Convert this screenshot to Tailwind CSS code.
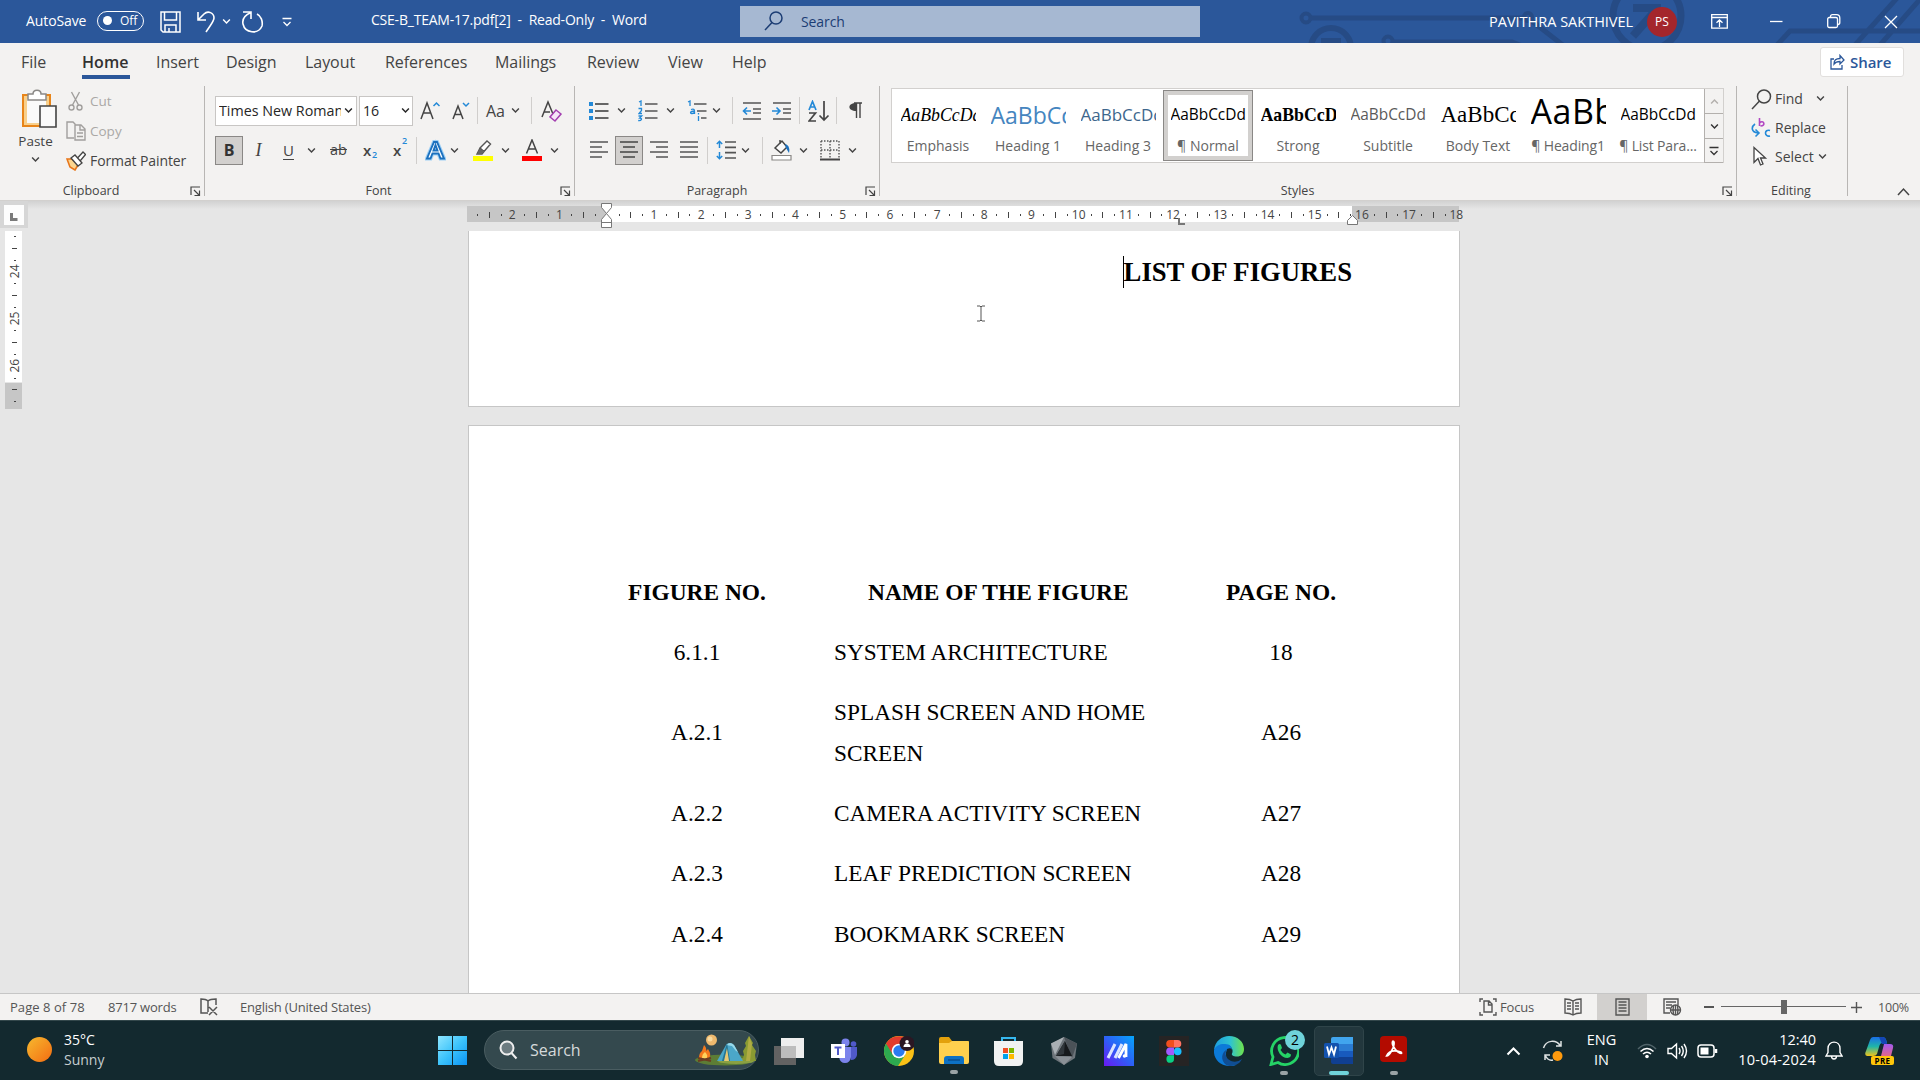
<!DOCTYPE html>
<html lang="en">
<head>
<meta charset="utf-8">
<title>CSE-B_TEAM-17.pdf[2] - Word</title>
<script src="https://cdn.jsdelivr.net/npm/@tailwindcss/browser@4"></script>
</head>
<body class="w-[1920px] h-[1080px] overflow-hidden flex flex-col bg-[#e6e6e6] font-['Open_Sans','Noto_Sans',sans-serif] text-[14px] text-[#444] whitespace-nowrap [&_svg]:block [&_svg]:shrink-0">
<svg class="absolute size-0">
  <symbol id="chev" viewBox="0 0 8 8"><path d="M1 2.3l3 3 3-3" fill="none" stroke="currentColor" stroke-width="1.3"/></symbol>
  <symbol id="launch" viewBox="0 0 11 11"><path d="M1 9V1h9M4 4l5 5M9.500 4.500v5h-5" fill="none" stroke="currentColor" stroke-width="1.200"/></symbol>
</svg>

<!-- Title bar -->
<header class="relative h-[43px] shrink-0 bg-[#2b579a] text-white flex items-center">
  <svg class="absolute left-[1280px] top-0" width="640" height="43" fill="none" stroke="#264b85" stroke-width="5">
    <circle cx="26" cy="18" r="4.500" stroke-width="4"/><path d="M31 18H244"/><circle cx="51" cy="48" r="20" stroke-width="6"/><path d="M41 41h17v4" stroke-width="6"/><circle cx="108" cy="41" r="4.500" stroke-width="4"/><path d="M113 42H232l10 4M248 18l36 28"/><circle cx="248" cy="17" r="4" stroke-width="4"/>
    <circle cx="367" cy="16" r="34" stroke-width="7"/><path d="M353 8h24v20M376 10L353 36" stroke-width="8"/>
    <path d="M496 46l14-15H640M575 45L618-3M600 45L642-3"/>
  </svg>
  <div class="relative w-[71px] ml-[26px] text-[14px] tracking-[-0.100px] pb-[2px]">AutoSave</div>
  <div class="relative w-[47px] h-5 mb-[2px] rounded-full border border-white flex items-center pl-[5px] gap-[8px] text-[12px]"><span class="size-[9px] rounded-full bg-white"></span>Off</div>
  <svg class="ml-4" width="21" height="22" fill="none" stroke="#fff" stroke-width="1.500"><path d="M1 1h19v20H3l-2-2zM4.500 1v8h12V1M5 21v-7h11v7M9 21v-4"/></svg>
  <svg class="ml-[15px]" width="20" height="24" fill="none" stroke="#fff" stroke-width="1.600"><path d="M2 2v8h8M2 10l6-6c4-4 10-1 10 4 0 3-2 5-8 14"/></svg>
  <svg class="ml-[6px]" width="9" height="9"><use href="#chev"/></svg>
  <svg class="ml-[10px]" width="24" height="24" fill="none" stroke="#fff" stroke-width="1.600"><path d="M2 2h8v7M10 2.500C4 5 1 9 2 14c2 9 15 11 19 2 1-5-1-10-5-12"/></svg>
  <svg class="ml-[17px]" width="10" height="10" fill="none" stroke="#fff" stroke-width="1.300"><path d="M0.500 1.500h9M1.500 5l3.500 3.500L8.500 5"/></svg>
  <div class="ml-[79px] w-[369px] pb-[4px] text-[14px] tracking-[-0.220px] whitespace-pre">CSE-B_TEAM-17.pdf[2]  -  Read-Only  -  Word</div>
  <div class="relative w-[460px] h-[31px] mb-[1px] bg-[#a6b8d2] text-[#1c3d74] flex items-center pl-6">
    <svg width="19" height="20" fill="none" stroke="#1c3d74" stroke-width="1.500"><circle cx="12" cy="7" r="6"/><path d="M8 11.500L1 19"/></svg>
    <span class="ml-[18px] tracking-[-0.100px]">Search</span>
  </div>
  <div class="relative ml-[289px] w-[158px] text-[14.500px]">PAVITHRA SAKTHIVEL</div>
  <div class="relative size-[30px] rounded-full bg-[#a4262c] flex items-center justify-center text-[12px]">PS</div>
  <svg class="relative ml-[34px]" width="17" height="15" fill="none" stroke="#fff" stroke-width="1.300"><path d="M.7.7h15.600v13.500H.7zM.7 3.500h15.600M8.500 13V6M5.500 8.800l3-3 3 3"/></svg>
  <svg class="relative ml-[42px]" width="13" height="3"><path d="M0 1.500h12.500" stroke="#fff" stroke-width="1.300"/></svg>
  <svg class="relative ml-11" width="14" height="15" fill="none" stroke="#fff" stroke-width="1.300"><rect x=".7" y="3.500" width="9.800" height="10" rx="1.500"/><path d="M3.500 3V2.500q0-1.800 2-1.800h4q3.300 0 3.300 3.300v4.500q0 2-2 2"/></svg>
  <svg class="relative ml-[43px]" width="14" height="14"><path d="M1 1l12 12M13 1L1 13" stroke="#fff" stroke-width="1.300"/></svg>
</header>

<!-- Ribbon tabs -->
<nav class="h-[41px] shrink-0 bg-[#f3f2f1] flex items-center text-[16px] tracking-[-0.050px] pl-[21px] pb-[3px]">
  <span class="w-[61px]">File</span>
  <span class="w-[74px] h-full"><span class="relative inline-flex items-center w-[48px] h-full font-semibold text-[#323130] tracking-[0.100px]">Home<span class="absolute left-0 bottom-[2px] w-[48px] h-[4px] bg-[#2b579a]"></span></span></span>
  <span class="w-[70px]">Insert</span><span class="w-[79px]">Design</span><span class="w-[80px]">Layout</span><span class="w-[110px]">References</span><span class="w-[92px]">Mailings</span><span class="w-[81px]">Review</span><span class="w-[64px]">View</span><span class="w-[1088px]">Help</span>
  <span class="w-[84px] h-[30px] bg-white border border-[#e1dfdd] rounded-[3px] flex items-center text-[#2b579a] font-semibold pl-[9px] text-[15px]">
    <svg class="mr-[5px]" width="15" height="16" fill="none" stroke="#2b579a" stroke-width="1.300"><path d="M4 5H1v10h11v-4M4 10c0-4 2-5.500 6-5.500V1.500l4 4.500-4 4V7.500C7 7.500 5.500 8 4 10z"/></svg>Share</span>
</nav>

<!-- Ribbon -->
<section class="h-[117px] shrink-0 bg-[#f3f2f1] border-b border-[#d2d0ce] flex pt-[2px] text-[13.500px]">
  <!-- Clipboard -->
  <div class="w-[205px] h-[110px] border-r border-[#b8b6b4] flex flex-col">
    <div class="flex h-[93px]">
      <div class="w-[66px] pl-[9px] flex flex-col items-center pt-[3px]">
        <svg width="38" height="40" fill="none"><path d="M4 6h27v31H4z" fill="#f8d08c" stroke="#e8851a" stroke-width="2"/><path d="M8 10h19v24H8z" fill="#fafafa"/><path d="M9 11V5h5c0-5 8-5 8 0h5v6z" fill="#fff" stroke="#8a8886" stroke-width="1.500"/><path d="M21 17h16v21H21z" fill="#fafafa" stroke="#444" stroke-width="1.600"/></svg>
        <span class="leading-[18px] mt-[3px] pr-[4px]">Paste</span>
        <svg class="mt-[5px] mr-[4px]" width="9" height="9"><use href="#chev"/></svg>
      </div>
      <div class="flex flex-col gap-[10px] pt-[5px] text-[#aaa8a6] leading-5">
        <div class="flex h-5 items-center"><svg class="mr-1" width="20" height="20" fill="none" stroke="#a19f9d" stroke-width="1.400"><path d="M5.500 1l7 13M13.500 1l-7 13"/><circle cx="5.500" cy="16.500" r="2.500"/><circle cx="13.500" cy="16.500" r="2.500"/></svg>Cut</div>
        <div class="flex h-5 items-center"><svg class="mr-1" width="20" height="20" fill="none" stroke="#a19f9d" stroke-width="1.400"><path d="M8 17H1V1h6l2 2v14M9 4h6l4 4v11H9zM14 4v5h5M11 12h6M11 15.500h6"/></svg>Copy</div>
        <div class="flex h-5 items-center text-[#444] text-[14px] tracking-[-0.100px]"><svg class="mr-1" width="20" height="20" fill="none"><path d="M1 8h5l6 6-3 5-5-3z" fill="#fbd58f" stroke="#e8761a" stroke-width="1.600"/><path d="M5 7l4-3 7 8-4 3zM12 6.500L17 1l2.500 2.500-5 6" fill="#fff" stroke="#444" stroke-width="1.300"/></svg>Format Painter</div>
      </div>
    </div>
    <div class="flex items-center h-[10px] shrink-0 mt-auto text-[12.500px]"><span class="w-[190px] text-center pr-[8px]">Clipboard</span><svg width="11" height="11"><use href="#launch"/></svg></div>
  </div>
  <!-- Font -->
  <div class="w-[370px] h-[110px] border-r border-[#b8b6b4] flex flex-col pl-[10px]">
    <div class="h-[29px] mt-[10px] flex items-center shrink-0">
      <div class="w-[142px] h-[30px] bg-white border border-[#c8c6c4] flex items-center pl-[3px] text-[14.300px] text-[#262626]"><span class="w-[122px] overflow-hidden">Times New Roman</span><svg class="ml-[3px]" width="9" height="9"><use href="#chev"/></svg></div>
      <div class="w-[54px] h-[30px] ml-[2px] bg-white border border-[#c8c6c4] flex items-center pl-[3px] text-[14.200px] text-[#262626]"><span class="w-[38px]">16</span><svg width="9" height="9"><use href="#chev"/></svg></div>
      <svg class="ml-[7px]" width="20" height="22" fill="none" stroke="#444" stroke-width="1.500"><path d="M1 19L7 3l6 16M3 13h8"/><path d="M13.500 6L16.500 3l3 3" stroke="#2389d7"/></svg>
      <svg class="ml-[12px]" width="18" height="22" fill="none" stroke="#444" stroke-width="1.500"><path d="M1 19L6 6l5 13M3 14.500h6"/><path d="M11 3l3 3 3-3" stroke="#2389d7"/></svg>
      <i class="w-px h-[27px] bg-[#d0cecc] ml-[7px]"></i>
      <span class="ml-[8px] w-[25px] text-[16px]">Aa</span><svg width="9" height="9"><use href="#chev"/></svg>
      <i class="w-px h-[27px] bg-[#d0cecc] ml-[11px]"></i>
      <svg class="ml-[9px]" width="22" height="24" fill="none" stroke="#444" stroke-width="1.500"><path d="M1 18L7 3l5 12M3 13h6"/><path d="M15 11l5 4-6 7-5-4z" fill="#f5e6f8" stroke="#a33fb0"/></svg>
    </div>
    <div class="h-[30px] mt-[10px] flex items-center shrink-0">
      <span class="w-7 h-[29px] bg-[#d2d0ce] border border-[#8a8886] flex items-center justify-center font-bold text-[16px] text-[#333]">B</span>
      <span class="w-[31px] text-center font-['Liberation_Serif',serif] italic text-[18px]">I</span>
      <span class="w-[29px] text-center underline underline-offset-[3px] text-[15px]">U</span>
      <svg class="ml-[4px]" width="9" height="9"><use href="#chev"/></svg>
      <span class="ml-[12px] w-[21px] text-center line-through text-[14.500px]">ab</span>
      <span class="ml-[14px] w-[14px] relative font-semibold text-[15px]">x<span class="absolute left-[9px] top-[9px] text-[9px] text-[#2389d7]">2</span></span>
      <span class="ml-[16px] w-[14px] relative font-semibold text-[15px]">x<span class="absolute left-[9px] top-[-5px] text-[9px] text-[#2389d7]">2</span></span>
      <i class="w-px h-[27px] bg-[#d0cecc] ml-[9px]"></i>
      <svg class="ml-[8px]" width="21" height="22" fill="none"><path d="M2 19.500L9 3h3l7 16.500h-3.500l-2-5h-6l-2 5zM8.500 11.500h4L10.500 6z" fill="#fff" stroke="#9fd0f5" stroke-width="4"/><path d="M2 19.500L9 3h3l7 16.500h-3.500l-2-5h-6l-2 5zM8.500 11.500h4L10.500 6z" fill="#fff" stroke="#1b70be" stroke-width="1.900"/></svg>
      <svg class="ml-[4px]" width="9" height="9"><use href="#chev"/></svg>
      <svg class="ml-[13px]" width="22" height="22" fill="none"><path d="M1 17h20v5H1z" fill="#ff0"/><path d="M8 9l7-7 3.500 3L12 12.500zM8 9l-3 6h5l2-2.500" fill="#fff" stroke="#555" stroke-width="1.400"/><path d="M8 9.500L5 15h5l2-2.500z" fill="#666"/></svg>
      <svg class="ml-[7px]" width="9" height="9"><use href="#chev"/></svg>
      <svg class="ml-[11px]" width="22" height="22" fill="none"><path d="M1 17h20v5H1z" fill="red"/><path d="M5.500 14.500L11 1l5.500 13.500M7.500 10h7" stroke="#444" stroke-width="1.500"/></svg>
      <svg class="ml-[7px]" width="9" height="9"><use href="#chev"/></svg>
    </div>
    <div class="flex items-center h-[10px] shrink-0 mt-auto text-[12.500px]"><span class="w-[345px] text-center pr-[18px]">Font</span><svg width="11" height="11"><use href="#launch"/></svg></div>
  </div>
  <!-- Paragraph -->
  <div class="w-[305px] h-[110px] border-r border-[#b8b6b4] flex flex-col pl-[14px]">
    <div class="h-[29px] mt-[10px] flex items-center shrink-0">
      <svg width="20" height="20"><path d="M6 3h13.500M6 10h13.500M6 17h13.500" stroke="#666" stroke-width="1.800"/><path d="M0 1h4v4H0zM0 8h4v4H0zM0 15h4v4H0z" fill="#2389d7"/></svg>
      <svg class="ml-[8px]" width="9" height="9"><use href="#chev"/></svg>
      <svg class="ml-[12px]" width="20" height="22"><path d="M7 4h12.500M7 11h12.500M7 18h12.500" stroke="#555" stroke-width="1.600"/><path d="M1 2l2-1v5M.5 8.500h3v2l-2.500 3h3M.5 16h3.200l-2 2c3 0 2 3-1.500 2.500" fill="none" stroke="#2389d7" stroke-width="1.300"/></svg>
      <svg class="ml-[8px]" width="9" height="9"><use href="#chev"/></svg>
      <svg class="ml-[12px]" width="20" height="22"><path d="M7 4h12.500M10 11h9.500M14 18h5.500" stroke="#555" stroke-width="1.600"/><path d="M1 2l2-1v5M4 9.500c4-1.500 3.500 1 3.500 4.500M7.500 11c-5 0-4.500 3-2.500 2.500 1 0 2.500-.5 2.500-2M11.500 13v1.500M11.500 16v5" fill="none" stroke="#2389d7" stroke-width="1.300"/></svg>
      <svg class="ml-[5px]" width="9" height="9"><use href="#chev"/></svg>
      <i class="w-px h-[27px] bg-[#d0cecc] ml-[11px]"></i>
      <svg class="ml-[9px]" width="20" height="20"><path d="M1 2h18M11 8h8M11 12h8M1 18h18" stroke="#555" stroke-width="1.600"/><path d="M9 10H2M5 6.500L1.500 10 5 13.500" fill="none" stroke="#2389d7" stroke-width="1.600"/></svg>
      <svg class="ml-[10px]" width="20" height="20"><path d="M1 2h18M11 8h8M11 12h8M1 18h18" stroke="#555" stroke-width="1.600"/><path d="M0 10h7.500M4.500 6.500L8 10l-3.500 3.500" fill="none" stroke="#2389d7" stroke-width="1.600"/></svg>
      <i class="w-px h-[27px] bg-[#d0cecc] ml-[7px]"></i>
      <svg class="ml-[8px]" width="22" height="22" fill="none" stroke-width="1.700"><path d="M1 10L4.500 1.500 8 10M2 7h5" stroke="#2389d7"/><path d="M1 13h6.500L1 21h7M16 1v19M11.500 15.500L16 20l4.500-4.500" stroke="#444"/></svg>
      <i class="w-px h-[27px] bg-[#d0cecc] ml-[6px]"></i>
      <svg class="ml-[11px]" width="14" height="17"><path d="M6 1h8M8.500 1v15M12 1v15" stroke="#444" stroke-width="1.400"/><path d="M8.500 1v8C-1 9-1 1 8.500 1z" fill="#444"/></svg>
    </div>
    <div class="h-[30px] mt-[10px] flex items-center shrink-0">
      <svg class="ml-px" width="19" height="18"><path d="M0 1h18M0 6h12M0 11h18M0 16h12" stroke="#555" stroke-width="1.700"/></svg>
      <span class="ml-[6px] w-7 h-[29px] bg-[#d2d0ce] border border-[#8a8886] flex items-center justify-center"><svg width="18" height="18"><path d="M0 1h18M3 6h12M0 11h18M3 16h12" stroke="#444" stroke-width="1.700"/></svg></span>
      <svg class="ml-[7px]" width="18" height="18"><path d="M0 1h18M6 6h12M0 11h18M6 16h12" stroke="#555" stroke-width="1.700"/></svg>
      <svg class="ml-[12px]" width="18" height="18"><path d="M0 1h18M0 6h18M0 11h18M0 16h18" stroke="#555" stroke-width="1.700"/></svg>
      <i class="w-px h-[27px] bg-[#d0cecc] ml-[9px]"></i>
      <svg class="ml-[8px]" width="21" height="20" fill="none"><path d="M9 2h11M9 7.300h11M9 12.600h11M9 18h11" stroke="#555" stroke-width="1.700"/><path d="M3.500 8V1.500M.8 4l2.700-2.700L6.200 4M3.500 12v6.500M.8 16l2.700 2.700L6.200 16" stroke="#2389d7" stroke-width="1.500"/></svg>
      <svg class="ml-[4px]" width="9" height="9"><use href="#chev"/></svg>
      <i class="w-px h-[27px] bg-[#d0cecc] ml-[12px]"></i>
      <svg class="ml-[8px]" width="21" height="22" fill="none"><path d="M1 16.500h19v4.500H1z" fill="#fff" stroke="#8a8886" stroke-width="1.200"/><path d="M4 9l7-7 5 6-6 6zM9 5V1" stroke="#444" stroke-width="1.500" fill="#fafafa"/><path d="M14 5c4 1 5 5 4 9l-3-5z" fill="#1b70be"/></svg>
      <svg class="ml-[7px]" width="9" height="9"><use href="#chev"/></svg>
      <svg class="ml-[12px]" width="20" height="21"><path d="M1 1h18M1 10h18M1 1v18M10 1v18M19 1v18" stroke="#555" stroke-width="1.400" stroke-dasharray="1.500 1.500"/><path d="M0 19.500h20" stroke="#444" stroke-width="2"/></svg>
      <svg class="ml-[8px]" width="9" height="9"><use href="#chev"/></svg>
    </div>
    <div class="flex items-center h-[10px] shrink-0 mt-auto text-[12.500px]"><span class="w-[276px] text-center pr-[20px]">Paragraph</span><svg width="11" height="11"><use href="#launch"/></svg></div>
  </div>
  <!-- Styles -->
  <div class="w-[857px] h-[110px] border-r border-[#b8b6b4] flex flex-col pl-[11px]">
    <div class="mt-[2px] w-[833px] h-[75px] shrink-0 flex bg-white border border-[#d2d0ce] text-[#666] text-[14px] [&_b]:font-normal [&_b]:text-black [&_b]:block [&_b]:w-[75px] [&_b]:h-[36px] [&_b]:overflow-hidden [&_b]:leading-[40px] [&>div]:w-[90px] [&>div]:shrink-0 [&>div]:h-[71px] [&>div]:flex [&>div]:flex-col [&>div]:items-center [&>div]:pt-[5px] [&_span]:leading-[22px] [&_span]:mt-[4px] pl-[1px] pt-[1px]">
      <div><b class="font-['Liberation_Serif',serif] italic text-[17.800px]">AaBbCcDd</b><span>Emphasis</span></div>
      <div><b class="text-[23px] font-light text-[#4585bf]!">AaBbCc</b><span>Heading 1</span></div>
      <div><b class="text-[17px] font-light text-[#3d668c]!">AaBbCcDd</b><span>Heading 3</span></div>
      <div class="outline outline-[#8a8886] -outline-offset-1 shadow-[inset_0_0_0_5px_#d2d0ce]"><b class="text-[15.400px]">AaBbCcDd</b><span>¶ Normal</span></div>
      <div><b class="font-['Liberation_Serif',serif] font-bold! text-[17.800px]">AaBbCcDd</b><span>Strong</span></div>
      <div><b class="text-[15.400px] text-[#5a5a5a]!">AaBbCcDd</b><span>Subtitle</span></div>
      <div><b class="font-['Liberation_Serif',serif] text-[23px]">AaBbCc</b><span>Body Text</span></div>
      <div><b class="text-[34px] leading-[32px]! tracking-[0.500px]">AaBb</b><span class="tracking-[-0.150px]">¶ Heading1</span></div>
      <div><b class="text-[15.400px]">AaBbCcDd</b><span class="tracking-[-0.150px]">¶ List Para...</span></div>
      <nav class="ml-[1px] -mt-[1px] w-[19px] flex flex-col text-[#333] [&>i]:h-[25px] [&>i]:shrink-0 [&>i]:flex [&>i]:items-center [&>i]:justify-center [&>i]:border-l [&>i]:border-b [&>i]:border-[#b3b0ad] [&>i]:bg-[#f3f2f1]">
        <i class="text-[#b3b0ad]"><svg class="rotate-180" width="9" height="9"><use href="#chev"/></svg></i>
        <i><svg width="9" height="9"><use href="#chev"/></svg></i>
        <i class="h-[24px]!"><svg width="10" height="10" fill="none" stroke="#333" stroke-width="1.300"><path d="M.5 1.500h9M1.500 5L5 8.500 8.500 5"/></svg></i>
      </nav>
    </div>
    <div class="flex items-center h-[10px] shrink-0 mt-auto text-[12.500px]"><span class="w-[831px] text-center pr-[18px]">Styles</span><svg width="11" height="11"><use href="#launch"/></svg></div>
  </div>
  <!-- Editing -->
  <div class="w-[111px] h-[110px] border-r border-[#b8b6b4] flex flex-col pl-[14px] text-[14px]">
    <div class="h-[29px] shrink-0 flex items-center mt-[-2px]"><svg class="mr-[3px] mt-[1px]" width="21" height="21" fill="none" stroke="#444" stroke-width="1.500"><circle cx="13" cy="7.500" r="6.500"/><path d="M8.500 12L1 20"/></svg><span class="w-[41px]">Find</span><svg width="9" height="9"><use href="#chev"/></svg></div>
    <div class="h-[29px] shrink-0 flex items-center"><svg class="mr-[3px]" width="21" height="21" fill="none" stroke-width="1.600"><path d="M8.500 1v8M8.500 6c4-4 7 3 1 3" stroke="#b146c2"/><path d="M4 7c-4 3-4 8 3 9M4.500 12.500L8 16l-3.500 3.500M19 13.500c-6-2-6 7 0 5.500" stroke="#2389d7"/></svg><span>Replace</span></div>
    <div class="h-[29px] shrink-0 flex items-center"><svg class="mr-[3px]" width="21" height="21" fill="#fff" stroke="#444" stroke-width="1.300"><path d="M3 1.500v15l4-4 2.500 6.500 2.500-1-2.500-6h5z"/></svg><span class="w-[43px]">Select</span><svg width="9" height="9"><use href="#chev"/></svg></div>
    <div class="flex items-center h-[10px] shrink-0 mt-auto text-[12.500px]"><span class="w-[80px] text-center">Editing</span></div>
  </div>
  <svg class="ml-[49px] mt-[101px]" width="13" height="9" fill="none" stroke="#444" stroke-width="1.500"><path d="M1 8l5.500-6L12 8"/></svg>
</section>

<!-- Document area -->
<main class="relative flex-1 min-h-0 overflow-hidden bg-[#e6e6e6] font-['Liberation_Serif',serif] text-black flex flex-col items-start">
  <div class="absolute inset-x-0 top-0 h-2 bg-linear-to-b from-[#d2d2d2] to-[#e6e6e6]"></div>
  <div class="absolute left-0 top-0 w-7 h-[27px] bg-[#d6d6d6] p-[4px]"><div class="w-5 h-5 bg-[#fdfdfd]"><svg width="20" height="20"><path d="M7.500 8v6.500h6" fill="none" stroke="#7a7a7a" stroke-width="3"/></svg></div></div>
  <svg id="rulers" class="absolute left-0 top-0 font-['Open_Sans',sans-serif]" width="1920" height="220"></svg>
  <div class="w-[992px] h-[176px] shrink-0 ml-[468px] mt-[30px] bg-white border border-t-0 border-[#c6c6c6] flex justify-end pt-[25px] pr-[107px]">
    <h1 class="text-[26.700px] leading-[32px] font-bold h-8 border-l border-black">LIST OF FIGURES</h1>
  </div>
  <div class="w-[992px] h-[640px] shrink-0 ml-[468px] mt-[18px] bg-white border border-[#c6c6c6] pt-[136px] pl-[144px] text-[23.300px] leading-[41px]">
    <table class="border-collapse table-fixed w-[740px]">
      <colgroup><col class="w-[168px]"><col class="w-[428px]"><col></colgroup>
      <tbody class="[&_td]:p-0 [&_td:first-child]:text-center [&_td:last-child]:text-center [&_td:nth-child(2)]:pl-[53px]">
        <tr class="h-[60px] font-bold text-[23.400px]"><td>FIGURE NO.</td><td class="pl-[87px]!">NAME OF THE FIGURE</td><td>PAGE NO.</td></tr>
        <tr class="h-[60px]"><td>6.1.1</td><td>SYSTEM ARCHITECTURE</td><td>18</td></tr>
        <tr class="h-[101px]"><td>A.2.1</td><td>SPLASH SCREEN AND HOME<br>SCREEN</td><td>A26</td></tr>
        <tr class="h-[60px]"><td>A.2.2</td><td>CAMERA ACTIVITY SCREEN</td><td>A27</td></tr>
        <tr class="h-[60px]"><td>A.2.3</td><td>LEAF PREDICTION SCREEN</td><td>A28</td></tr>
        <tr class="h-[62px]"><td>A.2.4</td><td>BOOKMARK SCREEN</td><td>A29</td></tr>
      </tbody>
    </table>
  </div>
  <svg class="absolute left-[976px] top-[104px]" width="10" height="17"><path d="M1 1h3l1 1 1-1h3M1 16h3l1-1 1 1h3M5 2v13" fill="none" stroke="#555"/></svg>
</main>

<!-- Status bar -->
<footer class="h-[27px] shrink-0 bg-[#f3f2f1] border-t border-[#c6c6c6] flex items-center text-[13px] tracking-[-0.200px] text-[#555] pl-[10px]">
  <span class="w-[98px] pt-[2px] tracking-[0.050px]">Page 8 of 78</span><span class="w-[92px] pt-[2px]">8717 words</span>
  <svg class="mr-[21px]" width="19" height="18" fill="none" stroke="#555" stroke-width="1.500"><path d="M8 3v11M8 3C6 1 4 1 1 1v14h7M8 3c2-2 4-2 8-2v6M9 9l8 8M17 9l-8 8"/></svg>
  <span class="w-[1239px] pt-[2px]">English (United States)</span>
  <svg width="18" height="18" fill="none" stroke="#555" stroke-width="1.400"><path d="M4 1H1v3M14 1h3v3M1 14v3h3M17 14v3h-3M5 3h5l3 3v8H5zM9.500 3v4H13"/></svg>
  <span class="ml-[3px] w-[64px] pt-[2px]">Focus</span>
  <svg width="18" height="18" fill="none" stroke="#555" stroke-width="1.400"><path d="M9 3C6 1 4 1 1 1v14c3 0 5 0 8 2 3-2 5-2 8-2V1c-3 0-5 0-8 2zM9 3v14M3 5h4M3 8h4M3 11h4M11 5h4M11 8h4M11 11h4"/></svg>
  <span class="ml-[15px] w-[50px] h-[26px] bg-[#d2d0ce] flex items-center justify-center"><svg width="15" height="18" fill="none" stroke="#555" stroke-width="1.400"><path d="M1 1h13v16H1zM3.500 4h8M3.500 7h8M3.500 10h8M3.500 13h8"/></svg></span>
  <svg class="ml-[16px]" width="19" height="18" fill="none" stroke="#555" stroke-width="1.400"><path d="M7 15H1V1h14v6M3 4h10M3 7h6M3 10h4"/><circle cx="12.500" cy="12" r="5"/><path d="M7.500 12h10M12.500 7v10M10.500 8q-1 4 0 8M14.500 8q1 4 0 8"/></svg>
  <i class="ml-[22px] w-[10px] h-[1.500px] bg-[#555]"></i>
  <div class="ml-[7px] w-[125px] h-[14px] relative flex items-center justify-center"><i class="absolute inset-x-0 top-[6px] h-px bg-[#666]"></i><i class="relative w-[6px] h-[14px] bg-[#666]"></i></div>
  <svg class="ml-[5px]" width="11" height="11"><path d="M0 5.500h11M5.500 0v11" stroke="#555" stroke-width="1.400"/></svg>
  <span class="ml-[16px] pt-[2px] text-[12.500px]">100%</span>
</footer>

<!-- Taskbar -->
<footer class="h-[60px] shrink-0 bg-[#13292f] border-t border-[#33474b] flex items-center text-white text-[14px] pl-[27px] [&>svg]:mt-[1px]">
  <div class="size-[25px] mb-[3px] rounded-full bg-linear-to-br from-[#f5b92e] to-[#f26a11]"></div>
  <div class="ml-[12px] w-[374px] leading-5 pb-[2px]">35°C<br><span class="text-[#c6cdcf]">Sunny</span></div>
  <svg width="29" height="29" class="mb-px"><defs><linearGradient id="w" x1="0" y1="0" x2="29" y2="29" gradientUnits="userSpaceOnUse"><stop stop-color="#8fe6ff"/><stop offset=".5" stop-color="#3cc3fb"/><stop offset="1" stop-color="#0a93f5"/></linearGradient></defs><path d="M0 0h14v14H0zM15 0h14v14H15zM0 15h14v14H0zM15 15h14v14H15z" fill="url(#w)"/></svg>
  <div class="ml-[17px] w-[275px] h-10 rounded-full bg-[#34494e] border border-[#4a5d61] flex items-center pl-[14px] text-[16px] text-[#d5dadb] mb-[1px]">
    <svg width="19" height="20" fill="#6c7b80" stroke="#eee" stroke-width="2"><circle cx="8" cy="8" r="6.500"/><path d="M12.500 13l5 5.500"/></svg><span class="ml-[12px] w-[149px]">Search</span>
    <svg class="ml-[15px]" width="62" height="32"><ellipse cx="31" cy="26" rx="30" ry="5.500" fill="#5d7d35"/><ellipse cx="42" cy="27" rx="18" ry="3" fill="#8aa043"/><circle cx="17.500" cy="6" r="5.500" fill="#eeb96e"/><circle cx="16" cy="5" r="2.500" fill="#f9dba0"/><path d="M55 2l4 7-1 2 4 6-1 4 1 6H48l2-6-1-4 3-5-1-3z" fill="#8a9a32"/><path d="M55 2l3 8-2 17h-4z" fill="#b0ac43"/><path d="M23 27l9-16q4-4 8 0l9 16z" fill="#4ba7c9"/><path d="M32 11q4-4 8 0l4 7-2-1-4-5z" fill="#98d9ea"/><path d="M33 9l-5 18h8z" fill="#237594"/><path d="M33 14l-3 13h5z" fill="#e7c874"/><path d="M5 24q0-5 3-7l2-6q3 3 2 6l2-2q4 6 1 9z" fill="#f4791c"/><path d="M8 24q0-4 3-6 4 4 1 7z" fill="#ffd25c"/><path d="M4 24l13 3M17 24L4 27" stroke="#6c3c22" stroke-width="2"/></svg>
  </div>
  <svg class="ml-[15px]" width="30" height="29"><path d="M0 9h22v19H0z" fill="#626262"/><path d="M7 1h23v20H7z" fill="#eee"/><path d="M7 9h15v12H7z" fill="#bdbdbd"/></svg>
  <svg class="ml-[27px]" width="27" height="26" viewBox="0 0 27 26"><circle cx="22.500" cy="6" r="2.800" fill="#5059c9"/><path d="M17 9h9v8q-1 5-6 5z" fill="#5059c9"/><circle cx="14.500" cy="4.500" r="4" fill="#7b83eb"/><path d="M8 9h12v10q-1 6-6 6t-6-6z" fill="#7b83eb"/><path d="M0 6h14v14H0z" fill="#fff"/><path d="M3.500 9.500h7M7 9.500V17" stroke="#5059c9" stroke-width="2"/></svg>
  <svg class="ml-[26px]" width="30" height="30" viewBox="0 0 30 30"><circle cx="15" cy="15" r="15" fill="#fbc116"/><path d="M15 15L2 7.500A15 15 0 0 0 14 30l7.500-11.500z" fill="#2da94f"/><path d="M15 8h13A15 15 0 0 0 2 7.500l7 11.500z" fill="#e33b2e"/><circle cx="15" cy="15" r="7.300" fill="#fff"/><circle cx="15" cy="15" r="5.700" fill="#2a7bf0"/><circle cx="23" cy="7.500" r="7.500" fill="#2b1723"/><circle cx="23" cy="5.700" r="1.800" fill="#fff"/><path d="M19.500 11q0-3.500 3.500-3.500t3.500 3.500z" fill="#fff"/></svg>
  <div class="relative ml-[25px]"><svg width="30" height="28"><path d="M0 2q0-2 2-2h8l3 4h15q2 0 2 2v4H0z" fill="#e3a10c"/><path d="M0 6h10l3-2h16q1 0 1 1v20q0 2-2 2H2q-2 0-2-2z" fill="#ffd04e"/><path d="M5 27v-5q0-3 3-3h14q3 0 3 3v5z" fill="#0d71c4"/><path d="M9 23h12" stroke="#084f91" stroke-width="1.500"/></svg><i class="absolute left-[11px] top-[33px] w-2 h-1 rounded-full bg-[#9aa3a6]"></i></div>
  <svg class="ml-[25px]" width="29" height="30" viewBox="0 0 29 30"><path d="M8 5V2h13v3" fill="none" stroke="#36b8ef" stroke-width="2"/><path d="M0 5h29v20q0 5-5 5H5q-5 0-5-5z" fill="#f1f2f2"/><path d="M9 12h5v5H9z" fill="#f04e24"/><path d="M15 12h5v5h-5z" fill="#7db700"/><path d="M9 18h5v5H9z" fill="#00a2ed"/><path d="M15 18h5v5h-5z" fill="#fdb900"/></svg>
  <svg class="ml-[28px]" width="26" height="28" viewBox="0 0 26 28"><path d="M13 0l13 6.500L24 21l-11 7L1.500 21 0 6.500z" fill="#6d747a"/><path d="M13 0L0 6.500 4 18z" fill="#a9afb4"/><path d="M13 0l13 6.500L21 21z" fill="#4b5258"/><path d="M14 4l7 15-16 0z" fill="#16191c"/><path d="M14 4L5 19l8-2z" fill="#30363b"/><path d="M4 19l9 9 8-8z" fill="#8a9096"/></svg>
  <svg class="ml-[27px]" width="30" height="30"><defs><linearGradient id="m" x1="0" y1="1" x2="1" y2="0"><stop stop-color="#6a18f2"/><stop offset=".5" stop-color="#2d60f7"/><stop offset="1" stop-color="#05a6fb"/></linearGradient></defs><path d="M0 0h30v30H0z" fill="url(#m)"/><path d="M4 22L11 8M11 22L18 8" stroke="#dbe4ff" stroke-width="3"/><path d="M14.500 22L22 8v13" stroke="#fff" stroke-width="2.800" fill="none"/><circle cx="20.500" cy="20" r="1.800" fill="#fff"/></svg>
  <svg class="ml-[25px]" width="30" height="30"><path d="M0 0h30v30H0z" fill="#262424"/><path d="M15 4h-4a3.800 3.800 0 0 0 0 7.600h4z" fill="#f24e1e"/><path d="M15 4h3.500a3.800 3.800 0 0 1 0 7.600H15z" fill="#ff7262"/><path d="M15 11.600h-4a3.800 3.800 0 0 0 0 7.600h4z" fill="#a259ff"/><circle cx="18.700" cy="15.400" r="3.800" fill="#1abcfe"/><path d="M15 19.200h-4a3.800 3.800 0 1 0 4 3.800z" fill="#0acf83"/></svg>
  <svg class="ml-[25px]" width="30" height="30" viewBox="0 0 30 30"><defs><linearGradient id="e"><stop stop-color="#1c9de0"/><stop offset=".55" stop-color="#2fc3d0"/><stop offset="1" stop-color="#6fe24a"/></linearGradient></defs><path d="M0 14C1 5 8 0 15 0c9 0 15 6 15 13 0 5-3 7.500-7 7.500-4 0-6-1.500-5-3C20 14 17 9 12 9 7 9 2 11 0 14z" fill="url(#e)"/><path d="M0 14C2 9 7 7.500 11 8c5 0 7 3 7 6-4-1-6 2-6 5 0 5 4 10 10 10-12 4-23-4-22-15z" fill="#0c7ad8"/><path d="M12 14q-2 8 5 11 6 2 11-2c-3 6-8 7-13 7C7 28 6 18 12 14z" fill="#104e93"/><path d="M13 13q5-2 5 2-1 2-.5 3.500Q13 21 12 17z" fill="#13292f"/></svg>
  <div class="relative ml-[25px]"><svg width="30" height="30" viewBox="0 0 30 30" fill="none"><path d="M2 28.500l2-7.500A13.500 13.500 0 1 1 9 26.500z" stroke="#25d366" stroke-width="2.800"/><path d="M9 9q2-2 3 0l1 3-1.500 2q2 3.500 5 4.500l2-2 3.500 2q0 3-3.500 3.500C12 22 7 14 9 9z" fill="#25d366"/></svg><span class="absolute left-[16px] top-[-6px] size-5 rounded-full bg-[#6fd3da] text-black text-[14px] leading-5 text-center">2</span><i class="absolute left-[11px] top-[35px] w-2 h-1 rounded-full bg-[#9aa3a6]"></i></div>
  <div class="relative ml-[15px] w-[50px] h-[50px] rounded-[5px] bg-[#22373d] border border-[#2f4449] flex justify-center pt-[10px]"><svg width="30" height="28"><path d="M7 2q0-2 2-2h20v7H7z" fill="#41a5ee"/><path d="M7 7h22v7H7z" fill="#2b7cd3"/><path d="M7 14h22v6H7z" fill="#185abd"/><path d="M7 20h22v7H9q-2 0-2-2z" fill="#103f91"/><rect y="6" width="15" height="15" rx="1.500" fill="#1352ae"/><path d="M3 9.500l2 8 2.500-7 2.500 7 2-8" stroke="#fff" stroke-width="1.800" fill="none"/></svg><i class="absolute left-[14px] bottom-0 w-5 h-1 rounded-full bg-[#6fd3da]"></i></div>
  <div class="relative ml-[16px] mb-[4px]"><svg width="27" height="26"><rect width="27" height="26" rx="4" fill="#b30b00"/><path d="M6.500 20C9 14 15 14 21 16c2 2-1 2-3 0-4-3-7-9-5-11 2 0 1 6-1 9-2 4-4 6-5.500 6z" fill="none" stroke="#fff" stroke-width="1.700"/></svg><i class="absolute left-[10px] top-[35px] w-2 h-1 rounded-full bg-[#9aa3a6]"></i></div>
  <svg class="ml-[99px]" width="15" height="9" fill="none" stroke="#fff" stroke-width="2"><path d="M1.500 7.500l6-6 6 6"/></svg>
  <svg class="ml-[21px]" width="22" height="22" fill="none" stroke="#dfe3e4" stroke-width="1.500"><path d="M1.500 8C4 0 14-1 18.500 6M19 1v5h-5M3 20v-5h5M3 15c2 4 5 6 8 5"/><circle cx="15.500" cy="16" r="5" fill="#ff9a0d" stroke="none"/></svg>
  <div class="ml-[23px] w-[29px] leading-5 flex flex-col items-center pb-[1px] text-[14.500px]"><span>ENG</span><span>IN</span></div>
  <svg class="ml-[21px]" width="20" height="16" fill="none" stroke-width="1.600"><path d="M1 6q9-9 18 0" stroke="#51646a"/><path d="M3.500 8.500q6.500-6 13 0M6 11q4-3.500 8 0" stroke="#fff"/><circle cx="10" cy="13.500" r="1.800" fill="#fff"/></svg>
  <svg class="ml-[10px]" width="21" height="18" fill="none" stroke="#fff" stroke-width="1.400"><path d="M1 6.500h3.500L9.500 2v14l-5-4.500H1zM12 6q2 3 0 6M14.500 4q3.500 5 0 10M17 2q5 7 0 14"/></svg>
  <svg class="ml-[9px]" width="21" height="14" fill="none" stroke="#fff" stroke-width="1.500"><rect x="1" y="1" width="16" height="12" rx="3"/><path d="M3.500 3.500h8v7h-8z" fill="#fff" stroke="none"/><path d="M19 5v4" stroke-width="2.500"/></svg>
  <div class="ml-[19px] w-[79px] text-right text-[14.500px] leading-5 flex flex-col pb-[2px]"><span class="tracking-[-0.050px]">12:40</span><span class="tracking-[0.200px]">10-04-2024</span></div>
  <svg class="ml-[9px]" width="18" height="20" fill="none" stroke="#fff" stroke-width="1.400"><path d="M1 15l2-3.500V7.500c0-8.500 12-8.500 12 0v4l2 3.500zM6.500 15c0 4 5 4 5 0"/></svg>
  <div class="relative ml-[22px] mb-[3px]"><svg width="29" height="24"><defs><linearGradient id="c1" x1="0" y1="0" x2="0" y2="1"><stop stop-color="#1a6ee8"/><stop offset=".5" stop-color="#1fb5a8"/><stop offset="1" stop-color="#f0c419"/></linearGradient><linearGradient id="c2" x1="0" y1="0" x2="0" y2="1"><stop stop-color="#a35af0"/><stop offset="1" stop-color="#f56a6a"/></linearGradient></defs><path d="M8 0h10q3 0 4 6h-5q-2 0-3 4l-2 7q-1 2-4 2H2q-3-1-1-5L5 3q1-3 3-3z" fill="url(#c1)"/><path d="M14 0h4q3 0 4 7h-5z" fill="#1446b5"/><path d="M19 7h6q4 0 3 4l-2 8q-1 4-4 4h-9q2 0 3-4z" fill="url(#c2)"/></svg><span class="absolute left-[6px] top-[19px] w-[23px] h-[9px] rounded-[2px] bg-[#ffc60a] text-black text-[8px] font-bold leading-[9px] text-center tracking-[0.400px]">PRE</span></div>
</footer>

<script>
  // Ruler numbering and tick marks; one centimetre spans 47.2px
  const cm = 47.2;
  let s = '<path d="M467 5h139v16H467zM1352 5h107v16h-107z" fill="#c6c6c6"/><path d="M606 5h746v16H606z" fill="#fff"/>';
  for (let i = -11; i <= 72; i++) {
    const x = 606.7 + i * cm / 4;
    if (i % 4 === 0) { if (i) s += `<text x="${x}" y="17.500" font-size="12" text-anchor="middle" fill="#444">${Math.abs(i / 4)}</text>`; }
    else if (i % 2 === 0) s += `<rect x="${Math.round(x)}" y="11" width="1" height="6" fill="#444"/>`;
    else s += `<rect x="${Math.round(x)}" y="13" width="1" height="2" fill="#444"/>`;
  }
  s += '<path d="M601.5 2.500h10v4l-5 6 5 6v8h-10v-8l5-6-5-6zM601.500 21.500h10M1347.500 23.500v-4l5-5 5 5v4z" fill="#fff" stroke="#777"/><path d="M1179 17v6h6" fill="none" stroke="#777" stroke-width="2"/>';
  s += '<path d="M5 30h17v151H5z" fill="#fff"/><path d="M5 182h17v26H5z" fill="#c6c6c6"/>';
  for (let i = -3; i <= 11; i++) {
    const y = 70.300 + i * cm / 4;
    if (i % 4 === 0) s += `<text transform="translate(18.500 ${y}) rotate(-90)" font-size="12" text-anchor="middle" fill="#444">${24 + i / 4}</text>`;
    else if (i % 2 === 0) s += `<rect x="12" y="${Math.round(y)}" width="5" height="1" fill="#444"/>`;
    else s += `<rect x="14" y="${Math.round(y)}" width="2" height="1" fill="#444"/>`;
  }
  document.getElementById('rulers').innerHTML = s;
</script>
</body>
</html>
